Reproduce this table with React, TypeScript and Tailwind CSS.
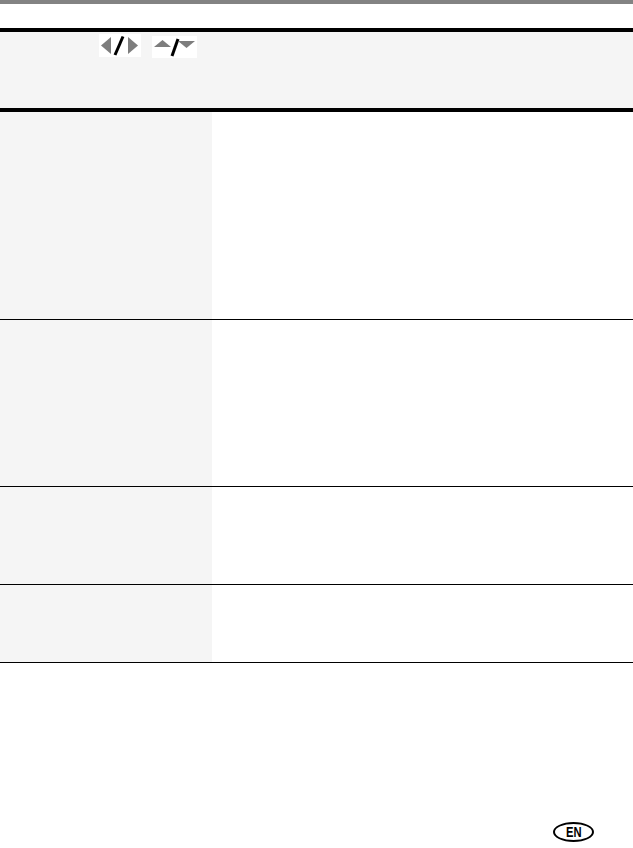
export default function App() {
  const rows = [208, 167, 98, 78];

  return (
    <main className="w-[633px] h-[848px] bg-white flex flex-col font-['Liberation_Sans',sans-serif]">
      {/* top rule */}
      <div className="h-[4px] bg-[#838383]" />
      <div className="h-[24px]" />

      {/* table header */}
      <div className="border-t-4 border-b-4 border-black bg-[#f5f5f5] h-[84px] flex items-start">
        <div className="ml-[99px] mt-[2px] w-[42px] h-[23px] bg-white flex items-center justify-center">
          <svg width="40" height="21" viewBox="0 0 40 21">
            <polygon points="11,2 11,19 1,10.5" fill="#7d7d7d" />
            <line x1="23" y1="1.5" x2="15" y2="20" stroke="#000" strokeWidth="3" />
            <polygon points="28,2 28,19 38,10.5" fill="#7d7d7d" />
          </svg>
        </div>
        <div className="ml-[11px] mt-[4px] w-[45px] h-[22px] bg-white flex items-center justify-center">
          <svg width="45" height="20" viewBox="0 0 45 20">
            <polygon points="2,10 19,10 10.5,3" fill="#7d7d7d" />
            <line x1="26" y1="2" x2="20" y2="19" stroke="#000" strokeWidth="3" />
            <polygon points="26,4 43,4 34.5,11" fill="#7d7d7d" />
          </svg>
        </div>
      </div>

      {/* table body */}
      {rows.map((h, i) => (
        <div key={i} className="flex border-b border-black" style={{ height: h }}>
          <div className="w-[212px] bg-[#f5f5f5]" />
          <div className="flex-1" />
        </div>
      ))}

      <div className="flex-1" />

      {/* language badge */}
      <div className="flex justify-end pr-[39px] pb-[6px]">
        <div className="w-[41px] h-[20px] rounded-[50%] border-2 border-black flex items-center justify-center">
          <span className="text-[14px] font-bold leading-none text-black scale-x-[0.8] font-['Liberation_Sans_Narrow','Liberation_Sans',sans-serif]">
            EN
          </span>
        </div>
      </div>
    </main>
  );
}
